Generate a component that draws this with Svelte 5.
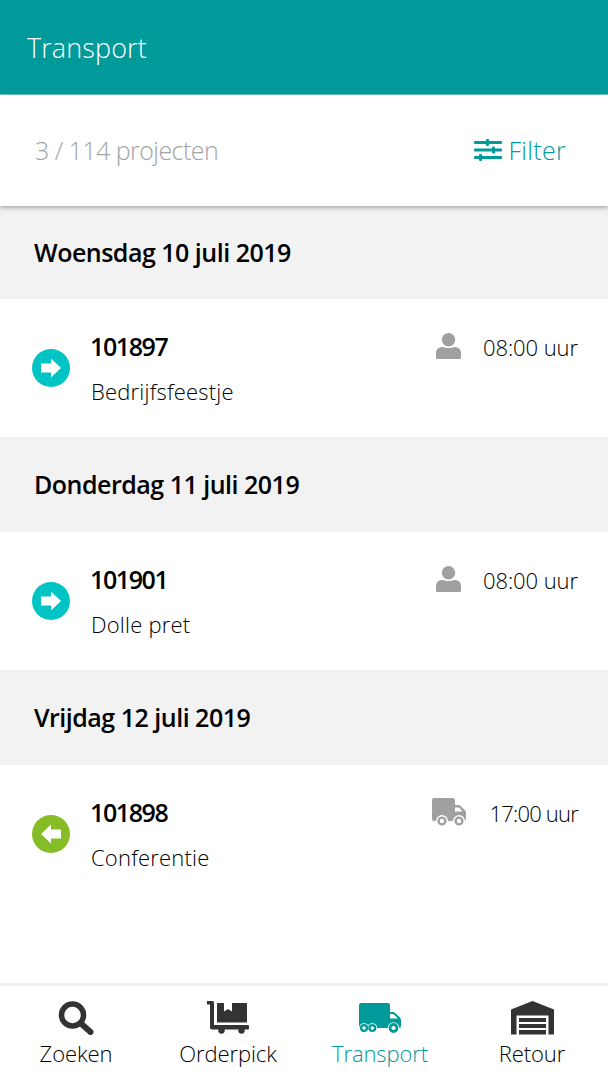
<script>
  const days = [
    { date: 'Woensdag 10 juli 2019', nr: '101897', name: 'Bedrijfsfeestje', time: '08:00 uur', dir: 'out', who: 'person' },
    { date: 'Donderdag 11 juli 2019', nr: '101901', name: 'Dolle pret', time: '08:00 uur', dir: 'out', who: 'person' },
    { date: 'Vrijdag 12 juli 2019', nr: '101898', name: 'Conferentie', time: '17:00 uur', dir: 'in', who: 'truck' }
  ];
</script>

<main>
  <header>Transport</header>

  <div class="filterbar">
    <span class="count">3 / 114 projecten</span>
    <span class="filter">
      <svg width="28" height="24" viewBox="0 0 28 24">
        <g fill="#009a9a">
          <rect x="0" y="3" width="28" height="3" rx="1" />
          <rect x="0" y="10.500" width="28" height="3" rx="1" />
          <rect x="0" y="18" width="28" height="3" rx="1" />
          <rect x="12" y="1" width="3" height="7" rx="1" />
          <rect x="18" y="8.500" width="3" height="7" rx="1" />
          <rect x="5" y="16" width="3" height="7" rx="1" />
        </g>
      </svg>
      Filter
    </span>
  </div>

  <section class="list">
    {#each days as day}
      <h2>{day.date}</h2>
      <div class="row">
        <span class="dir" class:in={day.dir === 'in'}>
          <svg width="22" height="20" viewBox="0 0 22 20">
            {#if day.dir === 'in'}
              <path fill="#fff" d="M1 10 11 .5v5h10v9H11v5z" />
            {:else}
              <path fill="#fff" d="M21 10 11 .5v5H1v9h10v5z" />
            {/if}
          </svg>
        </span>
        <div class="info">
          <div class="nr">{day.nr}</div>
          <div class="name">{day.name}</div>
        </div>
        <div class="when" class:late={day.who === 'truck'}>
          {#if day.who === 'person'}
            <svg width="25" height="28" viewBox="0 0 26 28">
              <circle cx="13" cy="7.500" r="7" fill="#a0a0a0" />
              <path fill="#a0a0a0" d="M1 27.500a1.500 1.500 0 0 1-1-1.500v-5c0-3.500 3-6 6.500-6 2 0 3.500 1.200 6.500 1.200s4.500-1.200 6.500-1.200c3.500 0 6.500 2.500 6.500 6v5a1.500 1.500 0 0 1-1 1.500z" />
            </svg>
          {:else}
            <svg width="34" height="30" viewBox="0 0 34 30">
              <path fill="#a0a0a0" d="M2 1h19a2 2 0 0 1 2 2v5h3c1 0 1.800.4 2.500 1l4 3.800c.9.800 1.500 1.800 1.500 3V22a2 2 0 0 1-2 2H2a2 2 0 0 1-2-2V3a2 2 0 0 1 2-2z" />
              <path fill="#fff" d="M23 10.500h3c.6 0 1 .2 1.400.6l3.100 3.400H23z" />
              <circle cx="10" cy="24" r="6" fill="#fff" />
              <circle cx="27" cy="24" r="6" fill="#fff" />
              <circle cx="10" cy="24" r="3.400" fill="#fff" stroke="#a0a0a0" stroke-width="2.400" />
              <circle cx="27" cy="24" r="3.400" fill="#fff" stroke="#a0a0a0" stroke-width="2.400" />
            </svg>
          {/if}
          <span>{day.time}</span>
        </div>
      </div>
    {/each}
  </section>

  <nav>
    <div class="tab">
      <svg width="36" height="34" viewBox="0 0 36 34">
        <circle cx="14.500" cy="14" r="11" fill="none" stroke="#333" stroke-width="5.500" />
        <path d="M23 22.500 32.500 31" stroke="#333" stroke-width="6" stroke-linecap="round" />
      </svg>
      <span>Zoeken</span>
    </div>
    <div class="tab">
      <svg width="42" height="34" viewBox="0 0 42 34">
        <path fill="#333" d="M0 0h5.500a1.500 1.500 0 0 1 1.500 1.500V24h34a1 1 0 0 1 1 1v2.500a1 1 0 0 1-1 1H37.500a3.200 3.200 0 1 1-6 0H17.500a3.200 3.200 0 1 1-6 0H5a2 2 0 0 1-2-2V3.500H0z" />
        <path fill="#333" d="M10 2h7v8.500l4-2.500 4 2.500V2h15v19.500H10z" />
      </svg>
      <span>Orderpick</span>
    </div>
    <div class="tab active">
      <svg width="42" height="34" viewBox="0 -2 42 34">
        <path fill="#009a9a" d="M2 0h27a2 2 0 0 1 2 2v7h2.500c1.100 0 2 .4 3 1.300l4 3.700c1 1 1.500 2 1.500 3.300V23a2 2 0 0 1-2 2H2a2 2 0 0 1-2-2V2a2 2 0 0 1 2-2z" />
        <path fill="#fff" d="M31 11h2.500c.7 0 1.300.3 2 .9l3.500 3.600h-8z" />
        <circle cx="5" cy="25" r="4.800" fill="#fff" />
        <circle cx="13.300" cy="25" r="4.800" fill="#fff" />
        <circle cx="34.500" cy="25" r="5.800" fill="#fff" />
        <circle cx="5" cy="25" r="2.900" fill="#fff" stroke="#009a9a" stroke-width="2.400" />
        <circle cx="13.300" cy="25" r="2.900" fill="#fff" stroke="#009a9a" stroke-width="2.400" />
        <circle cx="34.500" cy="25" r="3.500" fill="#fff" stroke="#009a9a" stroke-width="2.800" />
      </svg>
      <span>Transport</span>
    </div>
    <div class="tab">
      <svg width="43" height="34" viewBox="0 0 43 34">
        <path fill="#333" d="M21.500 0 43 8.500V33.500H37.500V14.500H5.500V33.500H0V8.500z" />
        <rect x="8" y="17" width="27" height="4" fill="#333" />
        <rect x="8" y="23" width="27" height="4" fill="#333" />
        <rect x="8" y="29" width="27" height="4.500" fill="#333" />
      </svg>
      <span>Retour</span>
    </div>
  </nav>
</main>

<style>
  :global(body) {
    margin: 0;
    background: #fff;
  }

  main {
    width: 608px;
    height: 1080px;
    display: flex;
    flex-direction: column;
    font-family: "Open Sans", "Noto Sans", sans-serif;
    color: #000;
    overflow: hidden;
  }

  header {
    box-sizing: border-box;
    height: 95px;
    flex: none;
    padding: 29px 27px 0;
    background: #009a9a;
    border-bottom: 1px solid #66c2c2;
    color: #fff;
    font-size: 27px;
    line-height: 37px;
    font-weight: 300;
    letter-spacing: 0.1px;
  }

  .filterbar {
    height: 111px;
    flex: none;
    display: flex;
    align-items: center;
    justify-content: space-between;
    padding: 0 42px 2px 35px;
    box-sizing: border-box;
    box-shadow: 0 2px 4px rgba(0, 0, 0, 0.3);
    position: relative;
  }

  .count {
    font-size: 25px;
    font-weight: 300;
    color: #a3a3a3;
    letter-spacing: -0.55px;
  }

  .filter {
    display: flex;
    align-items: center;
    gap: 7px;
    font-size: 25px;
    font-weight: 300;
    color: #009a9a;
    letter-spacing: 0.3px;
  }

  .list {
    flex: 1;
  }

  h2 {
    margin: 0;
    height: 95px;
    box-sizing: border-box;
    padding: 0 0 2px 34px;
    display: flex;
    align-items: center;
    background: #f2f2f2;
    font-size: 25px;
    font-weight: 600;
    color: #000;
    letter-spacing: -0.5px;
  }

  h2:first-child {
    height: 93px;
  }

  .row {
    height: 138px;
    display: flex;
    align-items: center;
    padding: 0 30px 0 32px;
  }

  .dir {
    width: 38px;
    height: 38px;
    flex: none;
    border-radius: 50%;
    background: #00c4c4;
    display: flex;
    align-items: center;
    justify-content: center;
  }

  .dir.in {
    background: #86bc25;
  }

  .info {
    margin-left: 21px;
    flex: 1;
    margin-top: -2px;
  }

  .nr {
    font-size: 25px;
    line-height: 34px;
    font-weight: 600;
    letter-spacing: -1.4px;
    margin-left: -1px;
  }

  .name {
    margin-top: 13px;
    font-size: 22px;
    line-height: 30px;
    font-weight: 300;
    letter-spacing: 0.2px;
  }

  .when {
    align-self: flex-start;
    margin-top: 31px;
    display: flex;
    align-items: center;
    gap: 22px;
    height: 34px;
    font-size: 22px;
    font-weight: 300;
    line-height: 34px;
    letter-spacing: -0.07px;
  }

  .when svg {
    margin-top: -3px;
    flex: none;
  }

  .when.late {
    letter-spacing: -0.8px;
    gap: 23px;
  }

  nav {
    height: 97px;
    flex: none;
    box-sizing: border-box;
    border-top: 3px solid #efefef;
    display: grid;
    grid-template-columns: repeat(4, 152px);
    background: #fff;
  }

  .tab {
    display: flex;
    flex-direction: column;
    align-items: center;
    padding-top: 15px;
    font-size: 22px;
    font-weight: 300;
    letter-spacing: -0.1px;
  }

  .tab svg {
    flex: none;
  }

  .tab span {
    line-height: 30px;
    margin-top: 3px;
  }

  .tab.active {
    color: #009a9a;
  }
</style>
